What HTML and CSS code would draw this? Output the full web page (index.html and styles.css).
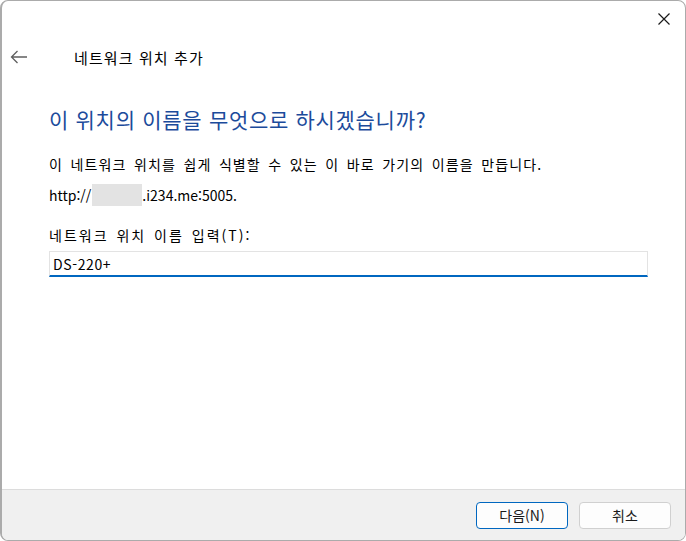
FILE: index.html
```html
<!DOCTYPE html>
<html lang="ko">
<head>
  <meta charset="UTF-8" />
  <meta name="viewport" content="width=device-width, initial-scale=1" />
  <title>네트워크 위치 추가</title>
  <link rel="stylesheet" href="styles.css">
</head>
<body>
  <div class="window">
    <div class="titlebar">
      <button class="close" aria-label="닫기">
        <svg width="12" height="12" viewBox="0 0 12 12"><path d="M0.5 0.5 L11.5 11.5 M11.5 0.5 L0.5 11.5" stroke="#1a1a1a" stroke-width="1.2" fill="none"/></svg>
      </button>
    </div>
    <div class="header">
      <button class="back" aria-label="뒤로">
        <svg width="18" height="14" viewBox="0 0 18 14"><path d="M17 7 H1.5 M7.5 1 L1.5 7 L7.5 13" stroke="#5f5f5f" stroke-width="1.3" fill="none"/></svg>
      </button>
      <span class="header-title">네트워크 위치 추가</span>
    </div>
    <div class="content">
      <h1 class="instruction">이 위치의 이름을 무엇으로 하시겠습니까?</h1>
      <p class="text">이 네트워크 위치를 쉽게 식별할 수 있는 이 바로 가기의 이름을 만듭니다.</p>
      <p class="text url">http://<span class="blur"></span>.i234.me:5005.</p>
      <label class="text label" for="loc-name">네트워크 위치 이름 입력(T):</label>
      <input id="loc-name" class="field" type="text" value="DS-220+" />
    </div>
    <div class="footer">
      <button class="btn primary">다음(N)</button>
      <button class="btn">취소</button>
    </div>
  </div>
</body>
</html>
```

FILE: styles.css
```css
html, body { margin: 0; height: 100%; }
body { font-family: "Noto Sans CJK KR", "Noto Sans", sans-serif; background: #fff; color: #000; }
.window { height: 100%; box-sizing: border-box; border: 1px solid #ababab; border-left-width: 2px; border-radius: 8px; display: flex; flex-direction: column; overflow: hidden; background: #fff; }
.titlebar { height: 38px; display: flex; justify-content: flex-end; }
.close { width: 46px; height: 38px; border: 0; background: none; padding: 0 0 2px 4px; display: flex; align-items: center; justify-content: center; }
.header { display: flex; align-items: center; height: 36px; }
.back { width: 36px; border: 0; background: none; padding: 0 0 0 8px; display: flex; }
.header-title { margin-left: 36px; font-size: 15px; letter-spacing: 1.1px; }
.content { padding: 0 37px 0 47px; display: flex; flex-direction: column; }
.instruction { margin: 29px 0 0; font-size: 21px; font-weight: normal; color: #1c4b9b; letter-spacing: 0.7px; }
.text { font-size: 14px; margin: 0; letter-spacing: 1.1px; word-spacing: 2.5px; }
.instruction + .text { margin-top: 20px; }
.url { margin-top: 10px; display: flex; align-items: center; letter-spacing: 0; }
.blur { display: inline-block; width: 50px; height: 22px; background: #e3e3e3; margin-left: 1px; }
.label { margin-top: 19px; letter-spacing: 2px; word-spacing: 2px; }
.field { margin-top: 6px; height: 26px; box-sizing: border-box; border: 1px solid #e3e3e3; border-bottom: 2px solid #0067c0; padding: 0 3px; font: 14px "Noto Sans CJK KR", sans-serif; letter-spacing: 0.6px; color: #000; outline: none; }
.footer { margin-top: auto; height: 51px; box-sizing: border-box; background: #f0f0f0; border-top: 1px solid #dcdcdc; display: flex; justify-content: flex-end; align-items: center; gap: 11px; padding-right: 14px; }
.btn { width: 92px; height: 27px; border: 1px solid #d0d0d0; border-radius: 4px; background: #fdfdfd; font: 14px "Noto Sans CJK KR", sans-serif; color: #1a1a1a; padding: 0; }
.btn.primary { border-color: #0067c0; }
```
